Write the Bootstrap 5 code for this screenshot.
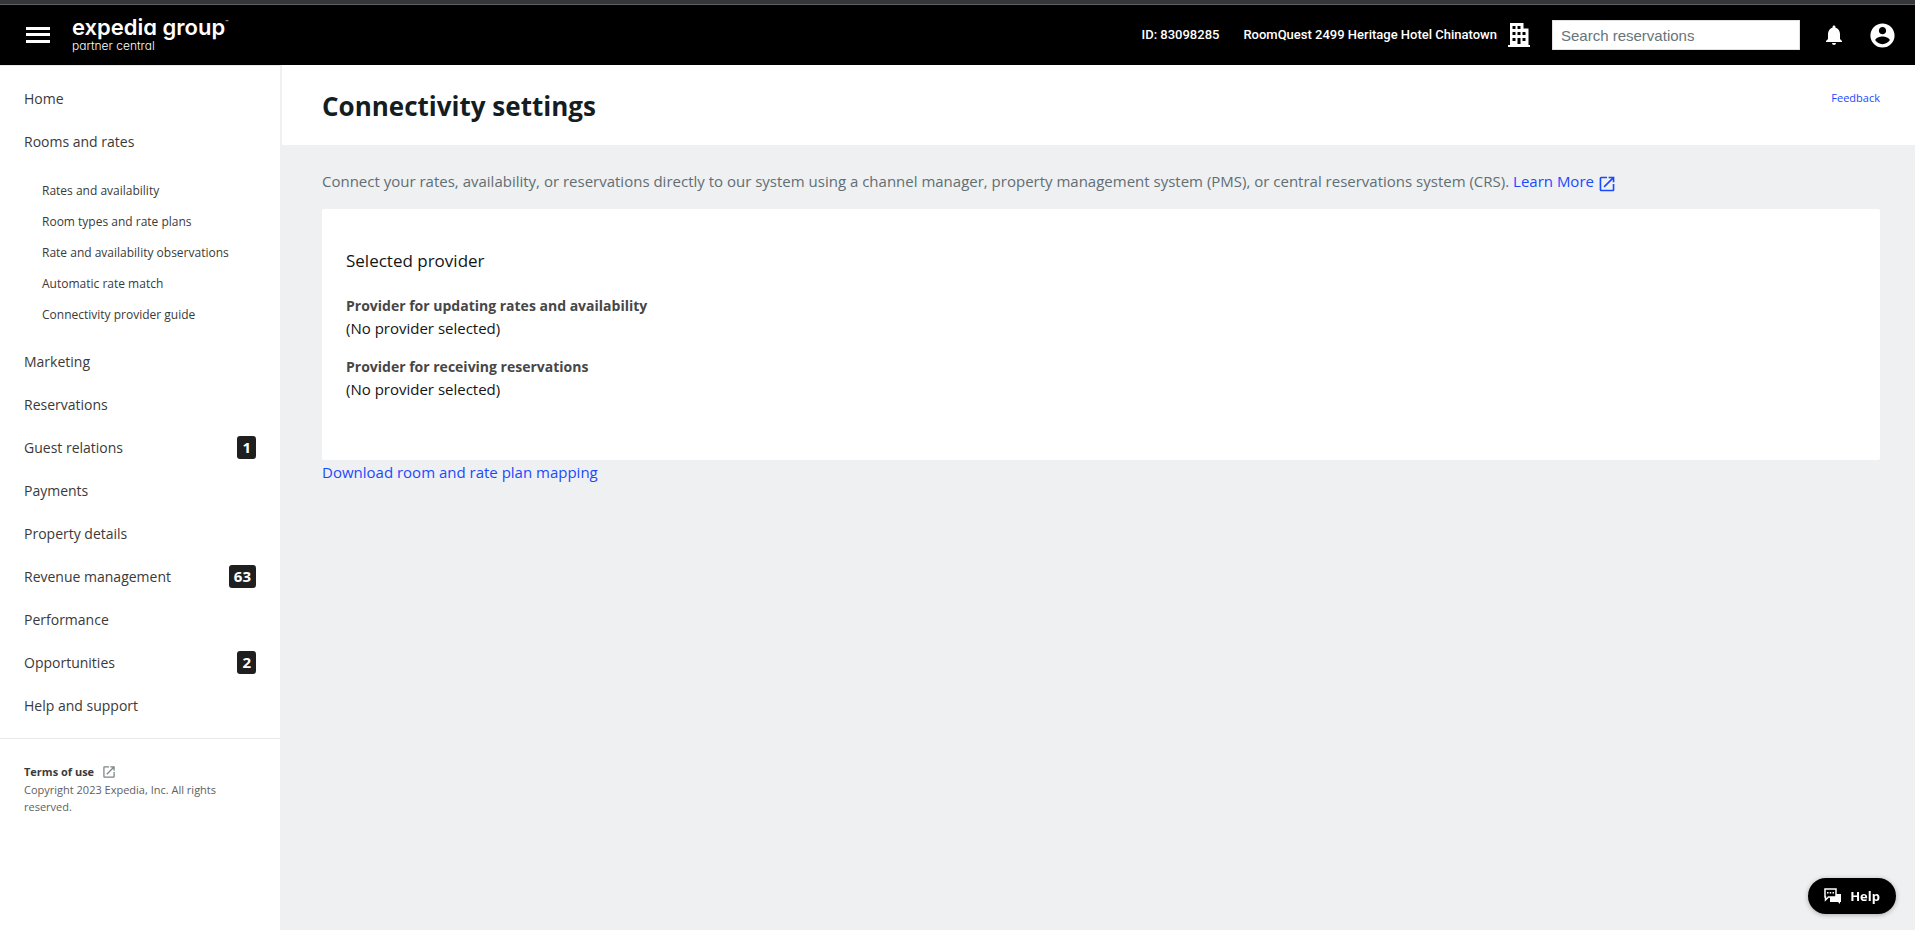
<!DOCTYPE html>
<html lang="en">
<head>
<meta charset="utf-8">
<meta name="viewport" content="width=device-width, initial-scale=1">
<title>Connectivity settings - Partner Central</title>
<link rel="stylesheet" href="https://cdn.jsdelivr.net/npm/bootstrap@5.3.0/dist/css/bootstrap.min.css">
<style>
  body { font-family: "Open Sans", "Noto Sans", sans-serif; font-size: 15px; line-height: 22px; color: #141d1f; background: #eff0f2; }
  a { text-decoration: none; color: #1a4aff; }
  a:hover { text-decoration: underline; }
  svg { display: block; flex: none; }

  .top-strip { height: 5px; background: #35363a; border-bottom: 1px solid #5f6064; }
  .app-header { height: 60px; padding-right: 2px; background: #000; color: #fff; font: 500 13px/20px Roboto, sans-serif; }
  .icon-btn { border: 0; padding: 0; background: none; color: #fff; }
  .menu-btn { margin-right: 18px; }
  .brand { padding-bottom: 1px; color: #fff; font-family: Inter, sans-serif; font-feature-settings: "cv11"; }
  .brand:hover { text-decoration: none; }
  .brand-name { font-size: 22px; font-weight: 600; line-height: 22px; }
  .brand-tm { font-size: 5px; line-height: 12px; }
  .brand-sub { font-size: 12px; font-weight: 300; line-height: 15px; }
  .property-link, .property-link:hover { color: #fff; }
  .search-box { width: 248px; height: 30px; margin: 0 24px 0 21px; padding: 0 8px; border: 1px solid #e0e0e0; border-radius: 0; font: 15px/20px "Liberation Sans", sans-serif; }
  .search-box::placeholder { color: #66757a; }

  .side-nav { width: 282px; background: #fff; border-top: 1px solid #ebebeb; border-right: 2px solid #eff0f2; }
  .side-nav a { color: #3a3a3a; }
  .main-links { padding: 11px 24px; font-size: 14px; }
  .main-links .top-link { height: 43px; }
  .sub-links { padding: 12px 0 10px 18px; font-size: 12px; }
  .sub-links a { height: 31px; }
  .count-badge { padding: 0 5px; border-radius: 3px; background: #1f1f1f; color: #fff; font-size: 15px; font-weight: 700; line-height: 23px; }
  .side-footer { padding: 24px; border-top: 1px solid #e6e8e9; font-size: 11px; line-height: 17px; color: #616161; }
  .side-footer a { line-height: 18px; }
  .side-footer svg { color: #7b8688; }

  .page-head { background: #fff; height: 80px; padding: 0 35px 0 40px; }
  .page-head h1 { padding-top: 2px; font-size: 26px; line-height: 36px; font-weight: 700; }
  .feedback-link { font-size: 11px; line-height: 18px; }
  .page-body { padding: 24px 35px 24px 40px; }
  .intro { color: #616e73; line-height: 24px; }
  .intro svg { margin-top: 2px; }
  .provider-card { border: 0; border-radius: 2px; padding: 40px 24px 60px; color: #141414; }
  .provider-card h2 { margin-bottom: 22px; font-size: 17px; line-height: 24px; font-weight: 400; }
  .provider-card dt { color: #474747; font-size: 14px; }
  .provider-card dd + dt { margin-top: 17px; }
  .download-link { line-height: 24px; }
  .help-btn { right: 19px; bottom: 16px; height: 36px; padding: 0 16px; border: 0; border-radius: 18px; background: #000; color: #fff; font-size: 13px; font-weight: 700; box-shadow: 0 1px 5px rgba(0,0,0,.3); }
</style>
</head>
<body class="d-flex flex-column min-vh-100">
<div class="top-strip"></div>
<header class="app-header d-flex align-items-center">
  <button class="icon-btn menu-btn ms-4" type="button" aria-label="Menu">
    <svg width="30" height="24" viewBox="0 0 30 24" fill="currentColor"><path d="M2 4h24v3H2zM2 10h24v3H2zM2 17h24v3H2z"/></svg>
  </button>
  <a class="brand d-flex flex-column" href="#">
    <span class="d-flex"><span class="brand-name">expedia group</span><span class="brand-tm">™</span></span>
    <span class="brand-sub">partner central</span>
  </a>
  <span class="ms-auto me-4">ID: 83098285</span>
  <a class="property-link d-flex align-items-center gap-2" href="#">RoomQuest 2499 Heritage Hotel Chinatown
    <svg width="26" height="24" viewBox="-3 0 26 24" fill="currentColor"><path fill-rule="evenodd" d="M0 22h2V0h13.500v5.500h5V22H22v2H0zM4.500 3v3h3V3zM9.500 3v3h3V3zM4.500 9v3h3V9zM9.500 9v3h3V9zM14.500 9v3h3V9zM4.500 15v3h3v-3zM14.500 15v3h3v-3zM9.500 15v6h3v-6z"/></svg>
  </a>
  <input class="search-box form-control flex-shrink-0" type="search" placeholder="Search reservations" aria-label="Search reservations">
  <button class="icon-btn me-4" type="button" aria-label="Notifications">
    <svg width="20" height="24" viewBox="2 0 20 24" fill="currentColor"><path d="M12 22c1.100 0 2-.9 2-2h-4c0 1.100.9 2 2 2zm6-6v-5c0-3.070-1.640-5.640-4.500-6.320V4c0-.83-.67-1.500-1.500-1.500s-1.500.67-1.500 1.500v.68C7.630 5.360 6 7.920 6 11v5l-2 2v1h16v-1l-2-2z"/></svg>
  </button>
  <button class="icon-btn me-3" type="button" aria-label="Account">
    <svg width="29" height="29" viewBox="0 0 24 24" fill="currentColor"><path d="M12 2C6.480 2 2 6.480 2 12s4.480 10 10 10 10-4.480 10-10S17.520 2 12 2zm0 3c1.660 0 3 1.340 3 3s-1.340 3-3 3-3-1.340-3-3 1.340-3 3-3zm0 14.200c-2.500 0-4.710-1.280-6-3.220.03-1.990 4-3.080 6-3.080 1.990 0 5.970 1.090 6 3.080-1.290 1.940-3.500 3.220-6 3.220z"/></svg>
  </button>
</header>

<div class="d-flex flex-grow-1">
  <aside class="side-nav flex-shrink-0">
    <nav class="main-links d-flex flex-column" aria-label="Main">
      <a class="top-link d-flex align-items-center" href="#">Home</a>
      <a class="top-link d-flex align-items-center" href="#">Rooms and rates</a>
      <div class="sub-links d-flex flex-column">
        <a class="d-flex align-items-center" href="#">Rates and availability</a>
        <a class="d-flex align-items-center" href="#">Room types and rate plans</a>
        <a class="d-flex align-items-center" href="#">Rate and availability observations</a>
        <a class="d-flex align-items-center" href="#">Automatic rate match</a>
        <a class="d-flex align-items-center" href="#">Connectivity provider guide</a>
      </div>
      <a class="top-link d-flex align-items-center" href="#">Marketing</a>
      <a class="top-link d-flex align-items-center" href="#">Reservations</a>
      <a class="top-link d-flex align-items-center justify-content-between" href="#">Guest relations <span class="count-badge">1</span></a>
      <a class="top-link d-flex align-items-center" href="#">Payments</a>
      <a class="top-link d-flex align-items-center" href="#">Property details</a>
      <a class="top-link d-flex align-items-center justify-content-between" href="#">Revenue management <span class="count-badge">63</span></a>
      <a class="top-link d-flex align-items-center" href="#">Performance</a>
      <a class="top-link d-flex align-items-center justify-content-between" href="#">Opportunities <span class="count-badge">2</span></a>
      <a class="top-link d-flex align-items-center" href="#">Help and support</a>
    </nav>
    <footer class="side-footer">
      <a class="d-flex align-items-center fw-bold gap-2" href="#">Terms of use
        <svg width="14" height="14" viewBox="1 1 22 22" fill="currentColor"><path d="M19 19H5V5h7V3H5a2 2 0 0 0-2 2v14a2 2 0 0 0 2 2h14c1.100 0 2-.9 2-2v-7h-2v7zM14 3v2h3.590l-9.830 9.830 1.410 1.410L19 6.410V10h2V3h-7z"/></svg>
      </a>
      <div>Copyright 2023 Expedia, Inc. All rights reserved.</div>
    </footer>
  </aside>

  <main class="flex-grow-1">
    <div class="page-head d-flex align-items-center justify-content-between">
      <h1 class="m-0">Connectivity settings</h1>
      <a class="feedback-link align-self-start mt-4" href="#">Feedback</a>
    </div>
    <div class="page-body">
      <p class="intro mb-3">Connect your rates, availability, or reservations directly to our system using a channel manager, property management system (PMS), or central reservations system (CRS).
        <a href="#">Learn More <svg class="d-inline-block" width="18" height="18" viewBox="1 1 22 22" fill="currentColor"><path d="M19 19H5V5h7V3H5a2 2 0 0 0-2 2v14a2 2 0 0 0 2 2h14c1.100 0 2-.9 2-2v-7h-2v7zM14 3v2h3.590l-9.830 9.830 1.410 1.410L19 6.410V10h2V3h-7z"/></svg></a></p>
      <section class="provider-card card">
        <h2>Selected provider</h2>
        <dl class="m-0">
          <dt>Provider for updating rates and availability</dt>
          <dd class="m-0">(No provider selected)</dd>
          <dt>Provider for receiving reservations</dt>
          <dd class="m-0">(No provider selected)</dd>
        </dl>
      </section>
      <a class="download-link d-inline-block" href="#">Download room and rate plan mapping</a>
    </div>
  </main>
</div>

<button class="help-btn position-fixed d-flex align-items-center gap-2" type="button">
  <svg width="18" height="16" viewBox="0 0 18 16"><path fill="#fff" d="M6 6h11v8h-1v2l-2-2H6z"/><path fill="#000" stroke="#fff" stroke-width="1.500" d="M1 1h11v8H4.500L1.500 12V9H1z"/><path fill="#fff" d="M3 4h1.500v1.500H3zM5.700 4h1.500v1.500H5.700zM8.500 4H10v1.500H8.500z"/></svg>
  Help
</button>
<script src="https://cdn.jsdelivr.net/npm/bootstrap@5.3.0/dist/js/bootstrap.bundle.min.js"></script>
</body>
</html>
